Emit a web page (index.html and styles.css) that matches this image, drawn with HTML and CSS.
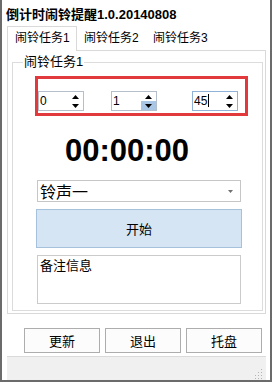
FILE: index.html
```html
<!DOCTYPE html>
<html lang="zh-CN">
<head>
    <meta charset="UTF-8">
    <title>倒计时闹铃提醒</title>
    <link rel="stylesheet" href="styles.css">
</head>
<body>
    <div class="window">
        <div class="titlebar">倒计时闹铃提醒1.0.20140808</div>

        <div class="tabs">
            <div class="tab active">闹铃任务1</div>
            <div class="tab">闹铃任务2</div>
            <div class="tab">闹铃任务3</div>
            <div class="tab-fill"></div>
        </div>

        <div class="tab-page">
            <fieldset class="group">
                <legend>闹铃任务1</legend>

                <!-- 时 / 分 / 秒 -->
                <div class="time-set">
                    <div class="spin spin-h">
                        <span class="spin-val">0</span>
                        <span class="spin-btns">
                            <span class="spin-up"><svg width="7" height="4"><polygon points="0,4 3.5,0 7,4" /></svg></span>
                            <span class="spin-down"><svg width="7" height="4"><polygon points="0,0 3.5,4 7,0" /></svg></span>
                        </span>
                    </div>
                    <div class="spin spin-m">
                        <span class="spin-val">1</span>
                        <span class="spin-btns">
                            <span class="spin-up"><svg width="7" height="4"><polygon points="0,4 3.5,0 7,4" /></svg></span>
                            <span class="spin-down hover"><svg width="7" height="4"><polygon points="0,0 3.5,4 7,0" /></svg></span>
                        </span>
                    </div>
                    <div class="spin spin-s focus">
                        <span class="spin-val">45<span class="caret"></span></span>
                        <span class="spin-btns">
                            <span class="spin-up"><svg width="7" height="4"><polygon points="0,4 3.5,0 7,4" /></svg></span>
                            <span class="spin-down"><svg width="7" height="4"><polygon points="0,0 3.5,4 7,0" /></svg></span>
                        </span>
                    </div>
                </div>

                <div class="clock">00:00:00</div>

                <div class="combo">
                    <span>铃声一</span>
                    <svg class="combo-arrow" width="5" height="3"><polygon points="0,0 2.5,3 5,0" /></svg>
                </div>

                <button class="start">开始</button>

                <div class="memo">备注信息</div>
            </fieldset>
        </div>

        <div class="actions">
            <button class="btn">更新</button>
            <button class="btn">退出</button>
            <button class="btn">托盘</button>
        </div>

        <div class="statusbar">
            <svg class="grip" width="10" height="10">
                <rect x="8" y="0" width="1" height="1" />
                <rect x="8" y="3" width="1" height="1" />
                <rect x="5" y="3" width="1" height="1" />
                <rect x="8" y="6" width="1" height="1" />
                <rect x="5" y="6" width="1" height="1" />
                <rect x="2" y="6" width="1" height="1" />
                <rect x="8" y="9" width="1" height="1" />
                <rect x="5" y="9" width="1" height="1" />
                <rect x="2" y="9" width="1" height="1" />
            </svg>
        </div>
    </div>
</body>
</html>
```

FILE: styles.css
```css
* {
    box-sizing: border-box;
}
body {
    margin: 0;
    background-color: #ffffff;
    font-family: "Liberation Sans", "Noto Sans CJK SC", sans-serif;
    font-size: 12px;
    color: #000000;
}
.window {
    width: 272px;
    height: 382px;
    border: 2px solid #6b6b6b;
    border-top: none;
    background-color: #ffffff;
    display: flex;
    flex-direction: column;
}
.titlebar {
    height: 26px;
    padding: 5px 0 0 4px;
    line-height: 20px;
    font-size: 13px;
    font-weight: bold;
}

/* tabs */
.tabs {
    display: flex;
    height: 25px;
    margin-left: 5px;
    width: 259px;
}
.tab {
    width: 69px;
    height: 25px;
    padding-left: 7px;
    line-height: 24px;
    border-bottom: 1px solid #d9d9d9;
}
.tab.active {
    width: 70px;
    border: 1px solid #d9d9d9;
    border-bottom: none;
    padding-left: 7px;
    line-height: 23px;
}
.tab-fill {
    flex: 1;
    border-bottom: 1px solid #d9d9d9;
}
.tab-page {
    margin-left: 5px;
    width: 259px;
    height: 263px;
    border: 1px solid #d9d9d9;
    border-top: none;
    padding-top: 4px;
}

/* group box */
.group {
    margin: 0 0 0 4px;
    padding: 0;
    width: 251px;
    height: 256px;
    min-width: 0;
    border: 1px solid #dcdcdc;
}
.group legend {
    margin-left: 10px;
    padding: 0 1px;
    font-size: 13px;
    line-height: 14px;
}

/* time spinners */
.time-set {
    display: flex;
    margin: 7px 0 0 22px;
    width: 213px;
    height: 40px;
    border: 3px solid #e23a3c;
    padding-top: 12px;
}
.spin {
    display: flex;
    width: 46px;
    height: 20px;
    border: 1px solid #b5bfcb;
    background-color: #ffffff;
}
.spin-m {
    margin-left: 27px;
}
.spin-s {
    margin-left: 35px;
}
.spin.focus {
    border-color: #8fb2d6;
}
.spin-val {
    flex: 1;
    padding-left: 1px;
    font-size: 12px;
    line-height: 18px;
}
.caret {
    display: inline-block;
    width: 1px;
    height: 13px;
    margin-left: 1px;
    vertical-align: -2px;
    background-color: #000000;
}
.spin-btns {
    width: 15px;
    display: flex;
    flex-direction: column;
}
.spin-up, .spin-down {
    height: 9px;
    display: flex;
    align-items: center;
    justify-content: center;
}
.spin-down.hover {
    background-color: #a9c6e4;
}
.spin-btns svg {
    fill: #000000;
    display: block;
}

/* clock */
.clock {
    margin: 18px 0 0 52px;
    font-size: 31px;
    line-height: 34px;
    font-weight: bold;
}

/* combo */
.combo {
    display: flex;
    align-items: center;
    justify-content: space-between;
    margin: 12px 0 0 24px;
    width: 204px;
    height: 22px;
    border: 1px solid #c6c6c6;
    padding: 0 7px 0 2px;
    font-size: 16px;
}
.combo-arrow {
    fill: #6f6f6f;
}

/* start */
.start {
    display: block;
    margin: 7px 0 0 23px;
    width: 206px;
    height: 39px;
    border: 1px solid #a6c1dc;
    background-color: #d5e5f4;
    font-family: inherit;
    font-size: 13px;
    color: #000000;
    padding: 0;
}

/* memo */
.memo {
    margin: 7px 0 0 24px;
    width: 204px;
    height: 49px;
    border: 1px solid #cbcbcb;
    padding: 2px 0 0 2px;
    font-size: 13px;
    line-height: 16px;
}

/* bottom buttons */
.actions {
    display: flex;
    gap: 5px;
    margin: 14px 0 0 22px;
}
.btn {
    width: 76px;
    height: 25px;
    border: 1px solid #adadad;
    background-color: #fcfcfc;
    font-family: inherit;
    font-size: 13px;
    color: #000000;
    padding: 0;
}

.statusbar {
    display: flex;
    justify-content: flex-end;
    align-items: flex-end;
    margin: 3px 0 0 5px;
    width: 259px;
    height: 24px;
    border-top: 1px solid #dadada;
    background-color: #f0f0f0;
    padding: 0 3px 1px 0;
}
.grip {
    fill: #b4b4b4;
}
```
